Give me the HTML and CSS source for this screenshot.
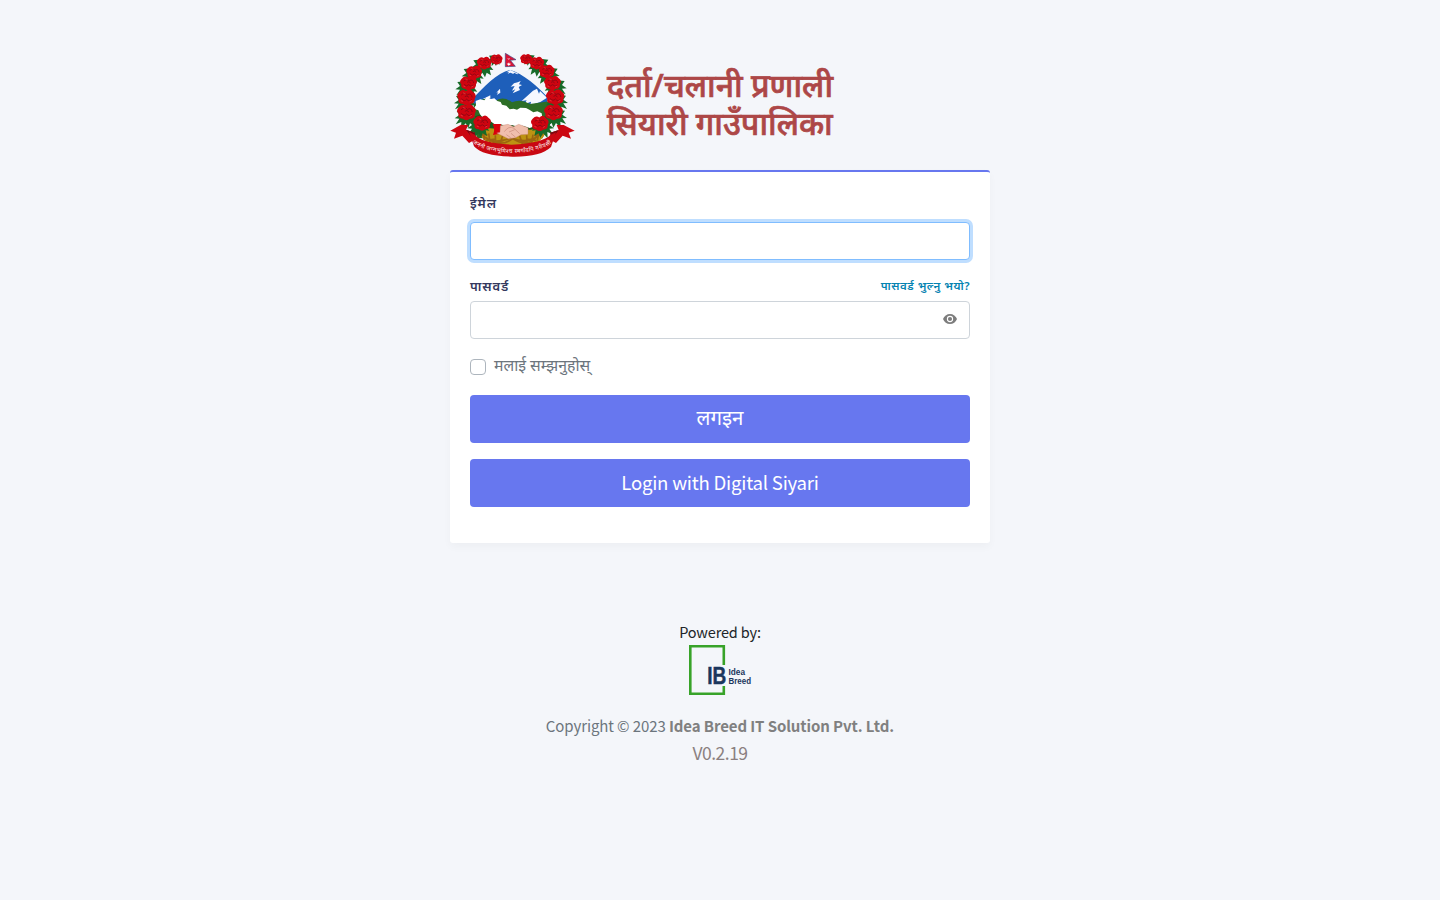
FILE: index.html
```html
<!DOCTYPE html>
<html lang="en">
<head>
<meta charset="utf-8">
<title>दर्ता/चलानी प्रणाली</title>
<link rel="stylesheet" href="styles.css">
</head>
<body>
<main class="page">
  <header class="brand">
    <svg class="emblem" viewBox="30 21 375 318" aria-hidden="true">
      <defs>
        <g id="leaf"><path d="M8-16L-30-12-22 0-36 10-22 11-33 28-16 21-17 40-3 25 5 39 10 25 23 33 19 16 30 17 18 2Z" fill="#176a28"/></g>
        <g id="rose">
          <path d="M-21-13Q-12-24-2-17 10-27 18-14 29-7 22 4 23 18 9 18-1 26-10 18-25 17-22 4-30-4-21-13Z" fill="#cf0410"/>
          <path d="M-15-6Q-5-15 2-7 13-13 15 0M-14 4Q-6 13 0 5 7 14 14 6M-5-2Q1-7 6 0" fill="none" stroke="#870814" stroke-width="2.500"/>
          <path d="M-10-12l7 2M8 12l6-3M-16 9l6 2" stroke="#f04345" stroke-width="2"/>
        </g>
      </defs>
      <path d="M98 161C132 127 171 82 211 75C249 86 294 125 324 158L318 188H104Z" fill="#1e5fba"/>
      <path d="M211 75l-12 7 8-1-4 5 9-3 8 4 2-4 10 5 3-2ZM180 131l-11 12 6-1-5 8 11-7ZM222 115l-10 10 12-2-8 14 10-4-8 12 22-10-4-9 10-6-9-2 5-10-9 4ZM279 137l-34 31 15-2-7 12 20-8-2 11 30-10 20-13-21-20-3 8-6-15ZM151 151l-24 12 24-4Z" fill="#f5f7ff"/>
      <path d="M103 177Q140 150 163 170 188 150 216 172 241 160 270 177L334 168V232L307 280H112L91 220Z" fill="#2c6e26"/>
      <path d="M105 214Q170 190 230 212T330 205L306 264H121Z" fill="#1e571c"/>
      <path d="M118 239Q144 253 168 250L246 249Q280 265 322 235Q323 305 215 317Q112 306 118 239Z" fill="#bd9313"/>
      <path d="M121 163l12 3 8-10 12 6 10-2 9 8 10 3 4 8 13 3 10 11 12-2 10 3 10-6 17 1 10 5 12 8 12-3 13 6 2 12-4 13 1 17-20-3-15 5-21-7-12 5-20-7-16 6-17-8-13 4-18-13-19-5-13-16-5-12-14-5 7-11-1-12Z" fill="#fff"/>
      <g class="wheat">
        <path d="M113 250C139 300 179 291 214 279C253 293 291 289 313 249M137 277Q180 310 218 281Q262 309 289 277"/>
        <path d="M119 253l18 9M119 267l24 3M129 255l4 30M146 265l5 34M137 286l30-4M166 271l1 29M158 293l33-7M188 272l-9 28M307 255l-20 11M309 268l-25 4M297 257l-5 30M279 269l-5 29M289 287l-28-5M260 271l1 28M270 294l-32-7M239 272l9 27"/>
      </g>
      <use href="#leaf" x="165" y="39" transform="translate(66 16) scale(.6)"/>
      <use href="#leaf" transform="translate(266 39) scale(-.6 .6)"/>
      <use href="#leaf" x="130" y="58"/><use href="#leaf" transform="translate(295 56) scale(-1 1)"/>
      <use href="#leaf" x="101" y="84"/><use href="#leaf" transform="translate(323 83) scale(-1 1)"/>
      <use href="#leaf" x="82" y="123"/><use href="#leaf" transform="translate(344 120) scale(-1 1)"/>
      <use href="#leaf" x="78" y="165"/><use href="#leaf" transform="translate(348 164) scale(-1 1)"/>
      <use href="#leaf" x="80" y="210"/><use href="#leaf" transform="translate(345 209) scale(-1 1)"/>
      <use href="#leaf" x="118" y="240"/><use href="#leaf" transform="translate(306 240) scale(-1 1)"/>
      <use href="#rose" transform="translate(170 43) scale(.72)"/><use href="#rose" transform="translate(259 42) scale(.72)"/>
      <use href="#rose" transform="translate(133 54) scale(.88)"/><use href="#rose" transform="translate(291 54) scale(.88)"/>
      <use href="#rose" transform="translate(103 82) scale(.94)"/><use href="#rose" transform="translate(321 79) scale(.94)"/>
      <use href="#rose" x="86" y="114"/><use href="#rose" x="338" y="114"/>
      <use href="#rose" transform="translate(80 157) scale(1.100)"/><use href="#rose" transform="translate(346 156) scale(1.100)"/>
      <use href="#rose" transform="translate(80 201) scale(1.120)"/><use href="#rose" transform="translate(341 201) scale(1.120)"/>
      <use href="#rose" transform="translate(127 234) scale(1.050)"/><use href="#rose" transform="translate(300 235) scale(1.050)"/>
      <path d="M158 237h25l-1 29-23 4q7-16-1-33Z" fill="#d9000c"/>
      <path d="M181 242l23-4 17 7 15-7 28 10v20l-21 1-16 9-22 3-35-17 10-2Z" fill="#f0beac" stroke="#bd7969" stroke-width="1"/>
      <path d="M193 260q13-19 29-10l17 16M199 269l13 9M213 265l14 12M224 254l-17 7" fill="none" stroke="#bd7969" stroke-width="1.500"/>
      <path d="M196 25L228 44 211 46 226 64 196 65Z" fill="#d91335" stroke="#3d4682" stroke-width="2"/>
      <path d="M201 39q4 5 8 0-1 9-8 0ZM200 55l4 1 3-4 2 4 5 0-4 3-4 3-3-3Z" fill="#fff"/>
      <path d="M31 257L63 239 85 240 78 254 105 263 102 286 87 294 67 272 42 281 48 263ZM404 257L371 240 350 240 356 255 331 263 333 286 348 294 368 272 393 281 386 263Z" fill="#cb0711"/>
      <path d="M78 254l27 9-3 23ZM356 255l-25 8 2 23Z" fill="#770b12"/>
      <path d="M87 260L105 270Q123 294 215 299Q310 294 331 270L348 262 333 306Q302 336 218 335Q128 334 102 304Z" fill="#c90812"/>
      <path id="motto-path" d="M98 294Q140 323 216 324Q292 323 337 294" fill="none"/>
      <text class="motto"><textPath href="#motto-path" textLength="246">जननी जन्मभूमिश्च स्वर्गादपि गरीयसी</textPath></text>
    </svg>
    <h1 class="title">दर्ता/चलानी प्रणाली<br>सियारी गाउँपालिका</h1>
  </header>

  <form class="card">
    <label class="label" for="email">ईमेल</label>
    <input class="field field-active" id="email" type="email">
    <div class="label-row">
      <label class="label" for="password">पासवर्ड</label>
      <a class="forgot">पासवर्ड भुल्नु भयो?</a>
    </div>
    <div class="field password">
      <input class="bare-input" id="password" type="password">
      <svg class="eye" viewBox="0 0 14 12"><path d="M7 1C3.800 1 1.200 3 0 6c1.200 3 3.800 5 7 5s5.800-2 7-5C12.800 3 10.200 1 7 1Z" fill="#7d7d7d"/><circle cx="7" cy="6" r="2.600" fill="none" stroke="#fff" stroke-width="1.100"/></svg>
    </div>
    <label class="remember"><input class="check" type="checkbox"><span class="remember-text">मलाई सम्झनुहोस्</span></label>
    <button class="button nepali" type="button">लगइन</button>
    <button class="button" type="button">Login with Digital Siyari</button>
  </form>

  <footer class="footer">
    <p class="powered">Powered by:</p>
    <svg class="company" viewBox="0 0 62 50" role="img" aria-label="Idea Breed">
      <path d="M34.800 20V1.300H1.300v47.400h33.500V41" fill="none" stroke="#38a329" stroke-width="2.600"/>
      <text class="ib" x="18.200" y="39" textLength="19" lengthAdjust="spacingAndGlyphs">IB</text>
      <text class="company-name" x="39.500" y="30" textLength="16.500" lengthAdjust="spacingAndGlyphs">Idea</text>
      <text class="company-name" x="39.500" y="39" textLength="22.500" lengthAdjust="spacingAndGlyphs">Breed</text>
    </svg>
    <p class="copyright">Copyright © 2023 <strong class="owner">Idea Breed IT Solution Pvt. Ltd.</strong></p>
    <p class="version">V0.2.19</p>
  </footer>
</main>
</body>
</html>
```
FILE: styles.css
```css
* { box-sizing: border-box; }
body {
  margin: 0;
  min-height: 100vh;
  background: #f4f6fa;
  color: #212529;
  font-family: "Noto Sans CJK SC", "Noto Sans", sans-serif;
}
.page { width: 540px; margin: 0 auto; padding-top: 52px; }
.brand { display: flex; height: 118px; }
.emblem { width: 125px; height: 106px; margin-right: 32px; flex: none; }
.wheat { fill: none; stroke: #9c6510; stroke-width: 5; }
.motto { fill: #fff; font: 400 17px "Noto Sans", sans-serif; }
.title { margin: 14px 0 0; color: #ad4747; font: 500 32px/38px "Noto Sans", sans-serif; white-space: nowrap; -webkit-text-stroke: .7px #ad4747; }
.card {
  display: flex;
  flex-direction: column;
  height: 373px;
  padding: 19px 20px 0;
  background: #fff;
  border-top: 2px solid #6777ef;
  border-radius: 3px;
  box-shadow: 0 4px 8px rgba(0, 0, 0, .03);
}
.label { color: #34395e; font: 600 13px/24px "Noto Sans", sans-serif; letter-spacing: .9px; }
.field { width: 100%; height: 38px; border: 1px solid #ced4da; border-radius: 4px; background: #fff; flex: none; }
.field-active { margin-top: 7px; border-color: #80bdff; box-shadow: 0 0 0 3px #bfdeff; outline: 0; }
.label-row { display: flex; justify-content: space-between; height: 24px; margin: 14px 0 3px; }
.forgot { color: #0583b1; font: 600 11.500px/24px "Noto Sans", sans-serif; letter-spacing: .5px; }
.password { display: flex; align-items: center; padding: 0 12px; }
.bare-input { flex: 1; min-width: 0; height: 34px; padding: 0; border: 0; background: transparent; outline: 0; }
.eye { width: 14px; height: 12px; margin-bottom: 2px; }
.remember { display: flex; align-items: center; height: 24px; margin: 16px 0; gap: 8px; color: #6c757d; font: 400 15.800px/24px "Noto Sans", sans-serif; }
.remember-text { padding-bottom: 4px; }
.check { appearance: none; width: 16px; height: 16px; margin: 0; border: 1px solid #adb5bd; border-radius: 4px; }
.button {
  height: 48px;
  margin: 0 0 16px;
  padding: 0 0 2px;
  color: #fff;
  background: #6777ef;
  border: 0;
  border-radius: 4px;
  font: 400 18.600px/46px "Noto Sans CJK SC", sans-serif;
  letter-spacing: -.22px;
}
.nepali { padding-bottom: 4px; font: 400 20.500px/44px "Noto Sans", sans-serif; letter-spacing: 0; }
.footer { display: flex; flex-direction: column; align-items: center; padding-top: 76px; }
.footer p { margin: 0; white-space: nowrap; }
.powered { font-size: 14.500px; line-height: 25px; letter-spacing: -.15px; }
.company { width: 62px; height: 50px; margin-top: 1px; overflow: visible; }
.ib { fill: #1b365d; stroke: #1b365d; stroke-width: .5px; font: 700 23.500px "Liberation Sans", sans-serif; }
.company-name { fill: #1b365d; font: 700 9px "Liberation Sans", sans-serif; }
.copyright { padding-top: 18px; color: #6c757d; font-size: 15px; line-height: 25px; letter-spacing: -.1px; }
.owner { color: #808080; }
.version { color: #8b8080; font-size: 17.500px; line-height: 29px; letter-spacing: -.5px; }
```
